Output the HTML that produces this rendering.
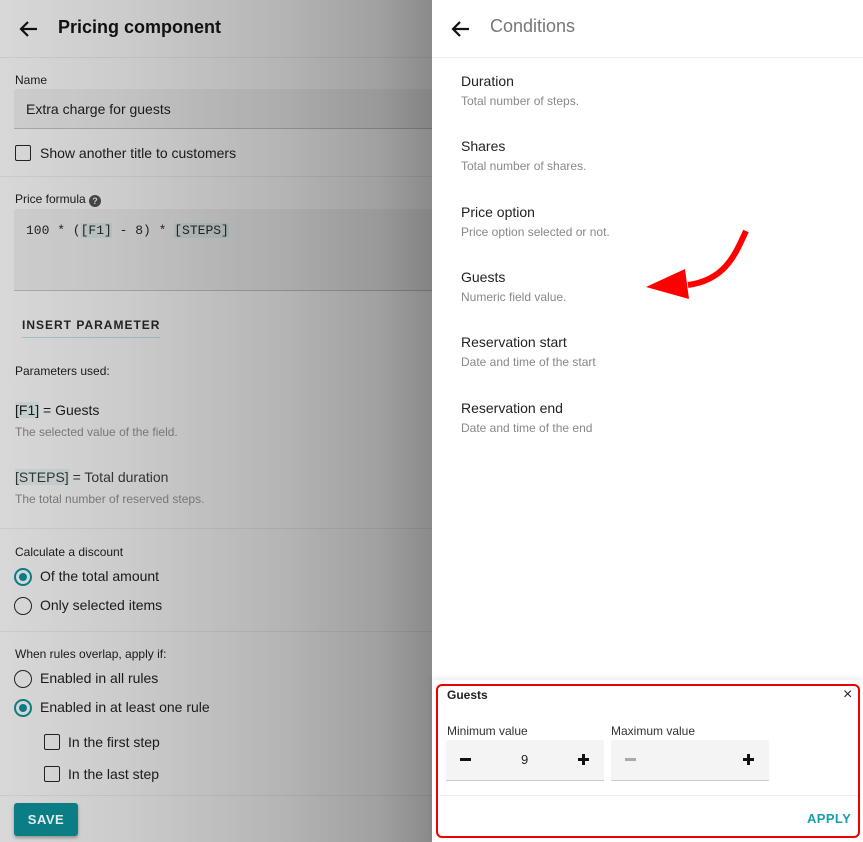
<!DOCTYPE html>
<html><head><meta charset="utf-8"><style>
*{margin:0;padding:0;box-sizing:border-box}
body{width:863px;height:842px;overflow:hidden;font-family:"Liberation Sans",Arial,sans-serif;position:relative;background:#fff}
.a{position:absolute;white-space:nowrap}
#left{position:absolute;left:0;top:0;width:432px;height:842px;background:linear-gradient(to right,#d8d8d8 0%,#cbcbcb 30%,#b5b5b5 65%,#a0a0a0 88%,#8a8a8a 100%)}
.hr{position:absolute;left:0;width:432px;height:1px;background:rgba(0,0,0,0.06)}
.fld{position:absolute;left:14px;width:418px;background:rgba(0,0,0,0.045);border-bottom:1px solid rgba(0,0,0,0.18);border-radius:3px 3px 0 0}
.cb{position:absolute;width:16px;height:16px;border:1.5px solid #222;border-radius:2px}
.rd{position:absolute;width:18px;height:18px;border:1.5px solid #222;border-radius:50%}
.rd.on{border:2px solid #0b7d85}
.rd.on:after{content:"";position:absolute;left:3px;top:3px;width:8px;height:8px;border-radius:50%;background:#0b7d85}
.t14{font-size:14px;color:#1a1a1a}
.t12{font-size:12px;color:#1a1a1a}
.sub{font-size:12px;color:#777}
.tag{background:rgba(11,125,133,0.08)}
.it{position:absolute;left:461px}
.it b{display:block;font-weight:normal;font-size:14px;color:#222}
.it i{display:block;font-style:normal;font-size:12px;color:#888;margin-top:5px}
.step{position:absolute;top:740px;width:158px;height:41px;background:#f4f4f4;border-bottom:1px solid #ccc;border-radius:3px 3px 0 0}
</style></head><body>
<div id="left">
<svg class="a" style="left:17px;top:17px" width="24" height="24" viewBox="0 0 24 24"><path d="M20 12H5M11 5l-7 7 7 7" fill="none" stroke="#111" stroke-width="2.2"/></svg>
<div class="a" style="left:58px;top:17px;font-size:18px;color:#111;font-weight:bold">Pricing component</div>
<div class="hr" style="top:57px"></div>
<div class="a t12" style="left:15px;top:73px">Name</div>
<div class="fld" style="top:89px;height:40px"></div>
<div class="a t14" style="left:26px;top:101px">Extra charge for guests</div>
<div class="cb" style="left:15px;top:145px"></div>
<div class="a t14" style="left:40px;top:145px">Show another title to customers</div>
<div class="hr" style="top:176px"></div>
<div class="a t12" style="left:15px;top:192px">Price formula <span style="display:inline-block;width:12px;height:12px;border-radius:50%;background:#444;color:#ccc;font-size:9px;text-align:center;line-height:12px;font-weight:bold;vertical-align:-1px">?</span></div>
<div class="fld" style="top:209px;height:82px"></div>
<div class="a" style="left:26px;top:223px;font-family:'Liberation Mono',monospace;font-size:13px;color:#222">100 * (<span class="tag">[F1]</span> - 8) * <span class="tag">[STEPS]</span></div>
<div class="a" style="left:22px;top:318px;font-size:12px;font-weight:bold;letter-spacing:1px;color:#222;border-bottom:1px solid rgba(11,125,133,0.25);padding-bottom:5px">INSERT PARAMETER</div>
<div class="a t12" style="left:15px;top:364px">Parameters used:</div>
<div class="a t14" style="left:15px;top:402px"><span class="tag">[F1]</span> = Guests</div>
<div class="a sub" style="left:15px;top:425px">The selected value of the field.</div>
<div class="a t14" style="left:15px;top:469px;color:#333"><span class="tag">[STEPS]</span> = Total duration</div>
<div class="a sub" style="left:15px;top:492px">The total number of reserved steps.</div>
<div class="hr" style="top:528px"></div>
<div class="a t12" style="left:15px;top:545px">Calculate a discount</div>
<div class="rd on" style="left:14px;top:568px"></div>
<div class="a t14" style="left:40px;top:568px">Of the total amount</div>
<div class="rd" style="left:14px;top:597px"></div>
<div class="a t14" style="left:40px;top:597px">Only selected items</div>
<div class="hr" style="top:631px"></div>
<div class="a t12" style="left:15px;top:647px">When rules overlap, apply if:</div>
<div class="rd" style="left:14px;top:670px"></div>
<div class="a t14" style="left:40px;top:670px">Enabled in all rules</div>
<div class="rd on" style="left:14px;top:699px"></div>
<div class="a t14" style="left:40px;top:699px">Enabled in at least one rule</div>
<div class="cb" style="left:44px;top:734px"></div>
<div class="a t14" style="left:68px;top:734px">In the first step</div>
<div class="cb" style="left:44px;top:766px"></div>
<div class="a t14" style="left:68px;top:766px">In the last step</div>
<div class="hr" style="top:795px"></div>
<div class="a" style="left:14px;top:803px;width:64px;height:33px;background:#0b7d85;border-radius:3px;box-shadow:0 2px 3px rgba(0,0,0,0.3);color:#dfeeee;font-size:13px;font-weight:bold;text-align:center;line-height:33px;letter-spacing:0.5px">SAVE</div>
</div>

<svg class="a" style="left:449px;top:17px" width="24" height="24" viewBox="0 0 24 24"><path d="M20 12H5M11 5l-7 7 7 7" fill="none" stroke="#111" stroke-width="2.2"/></svg>
<div class="a" style="left:490px;top:16px;font-size:18px;color:#777">Conditions</div>
<div class="a" style="left:432px;top:57px;width:431px;height:1px;background:#eee"></div>
<div class="it" style="top:73px"><b>Duration</b><i>Total number of steps.</i></div>
<div class="it" style="top:138px"><b>Shares</b><i>Total number of shares.</i></div>
<div class="it" style="top:204px"><b>Price option</b><i>Price option selected or not.</i></div>
<div class="it" style="top:269px"><b>Guests</b><i>Numeric field value.</i></div>
<div class="it" style="top:334px"><b>Reservation start</b><i>Date and time of the start</i></div>
<div class="it" style="top:400px"><b>Reservation end</b><i>Date and time of the end</i></div>

<svg class="a" style="left:640px;top:225px" width="120" height="80" viewBox="640 225 120 80">
<path d="M746 231 C735 255 725 280 688 285" fill="none" stroke="#f00" stroke-width="6"/>
<path d="M646 287 L685 269 L689 299 Z" fill="#f00"/>
</svg>

<div class="a" style="left:432px;top:680px;width:431px;height:162px;background:#fff;box-shadow:0 -2px 6px rgba(0,0,0,0.08)"></div>
<div class="a" style="left:436px;top:684px;width:424px;height:154px;border:2px solid #e00;border-radius:6px"></div>
<div class="a" style="left:447px;top:688px;font-size:12px;font-weight:bold;color:#222">Guests</div>
<div class="a" style="left:843px;top:686px;font-size:16px;color:#222">×</div>
<div class="a t12" style="left:447px;top:724px;color:#333">Minimum value</div>
<div class="a t12" style="left:611px;top:724px;color:#333">Maximum value</div>
<div class="step" style="left:446px"></div>
<div class="step" style="left:611px"></div>
<div class="a" style="left:460px;top:758px;width:11px;height:3px;background:#111"></div>
<div class="a" style="left:521px;top:752px;font-size:13px;color:#222">9</div>
<div class="a" style="left:578px;top:758px;width:11px;height:3px;background:#111"></div>
<div class="a" style="left:582px;top:754px;width:3px;height:11px;background:#111"></div>
<div class="a" style="left:625px;top:758px;width:11px;height:3px;background:#aaa"></div>
<div class="a" style="left:743px;top:758px;width:11px;height:3px;background:#111"></div>
<div class="a" style="left:747px;top:754px;width:3px;height:11px;background:#111"></div>
<div class="a" style="left:440px;top:795px;width:418px;height:1px;background:#eee"></div>
<div class="a" style="left:807px;top:811px;font-size:13px;font-weight:bold;color:#1aa0a8;letter-spacing:0.4px">APPLY</div>
</body></html>
